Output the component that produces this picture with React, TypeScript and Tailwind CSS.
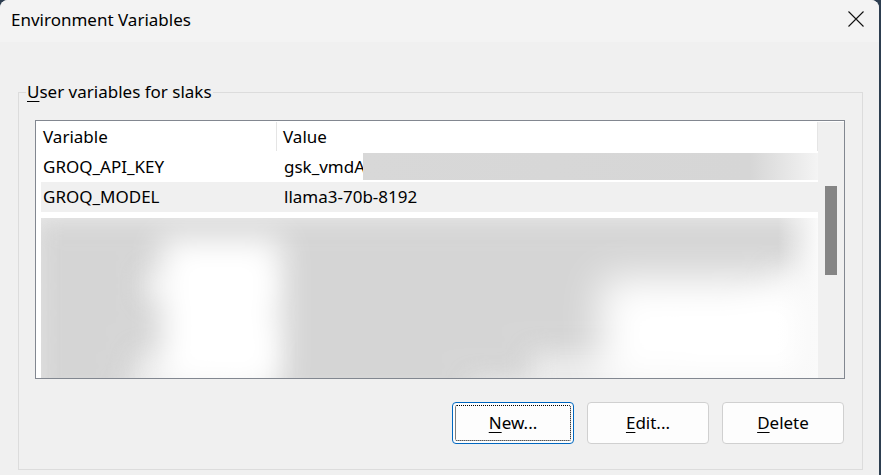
import React from "react";

const font = { fontFamily: '"Noto Sans", "Open Sans", sans-serif' };

function Btn({ u, rest, focused }: { u: string; rest: string; focused?: boolean }) {
  return (
    <div
      className={
        "relative w-[122px] h-[42px] rounded-[4px] bg-[#fdfdfd] flex items-center justify-center text-[17px] text-black border " +
        (focused ? "border-[#0067c0]" : "border-[#d0d0d0]")
      }
    >
      {focused && (
        <div className="absolute inset-[2px] border border-dotted border-black rounded-[2px]" />
      )}
      <span>
        <span className="underline underline-offset-[3px] decoration-1">{u}</span>
        {rest}
      </span>
    </div>
  );
}

function BlurRow({ a, c }: { a: number; c: number }) {
  return (
    <div className="h-[27px] flex items-center">
      <div className="w-[236px] h-full flex items-center">
        <div className="h-[26px] bg-[#d4d4d4]" style={{ width: a }} />
      </div>
      <div className="flex-1 h-full flex items-center">
        <div className="h-[26px] bg-[#d4d4d4]" style={{ width: c }} />
      </div>
    </div>
  );
}

export default function App() {
  return (
    <div className="w-[881px] h-[475px] bg-[#2d3e50] flex" style={font}>
      <div className="w-[879px] h-full bg-[#f0f0f0] rounded-t-[8px] flex flex-col overflow-hidden">
        {/* title bar */}
        <div className="h-[42px] bg-[#f3f3f3] flex items-start justify-between shrink-0">
          <div className="h-[39px] flex items-center pl-[11px] text-[17px] text-black">Environment Variables</div>
          <div className="w-[46px] h-[38px] flex items-center justify-center">
            <svg width="16" height="16" viewBox="0 0 16 16">
              <path d="M0.5 0.5 L15.5 15.5 M15.5 0.5 L0.5 15.5" stroke="#111" strokeWidth="1.1" fill="none" />
            </svg>
          </div>
        </div>

        {/* group box */}
        <div className="relative mt-[50px] ml-[18px] mr-[16px] mb-[5px] flex-1 border border-[#dcdcdc] flex flex-col">
          <div className="absolute left-[7px] top-[-12px] px-[1px] bg-[#f0f0f0] text-[17px] leading-[22px] text-black">
            <span className="underline underline-offset-[3px] decoration-1">U</span>ser variables for slaks
          </div>

          {/* list view */}
          <div className="ml-[16px] mt-[27px] w-[810px] h-[259px] border border-[#828790] bg-white flex overflow-hidden">
            <div className="flex-1 pl-[5px] flex flex-col overflow-hidden">
              {/* header */}
              <div className="h-[31px] flex text-[17px] text-black shrink-0">
                <div className="w-[236px] flex items-center pl-[2px] border-r border-[#e5e5e5] my-[1px]">Variable</div>
                <div className="flex-1 flex items-center pl-[6px] border-r border-[#e5e5e5] my-[1px]">Value</div>
              </div>
              {/* row 1 */}
              <div className="h-[30px] flex text-[17px] text-black shrink-0 relative">
                <div className="w-[236px] flex items-center pl-[2px]">GROQ_API_KEY</div>
                <div className="flex-1 flex items-center pl-[7px]">gsk_vmdA</div>
                <div className="absolute left-[322px] right-0 top-[1px] h-[27px] bg-gradient-to-r from-[#d8d8d8] via-[#d6d6d6] via-85% to-[#f4f4f4]" />
              </div>
              {/* row 2 */}
              <div className="h-[30px] flex text-[17px] text-black bg-[#f0f0f0] shrink-0">
                <div className="w-[236px] flex items-center pl-[2px]">GROQ_MODEL</div>
                <div className="flex-1 flex items-center pl-[7px]">llama3-70b-8192</div>
              </div>
              {/* blurred rows */}
              <div className="mt-[6px] flex-1 relative overflow-hidden bg-[#ececec]">
                <div className="absolute inset-[-6px] blur-[12px]">
                  <div className="h-[6px]" />
                  <BlurRow a={236} c={560} />
                  <BlurRow a={236} c={540} />
                  <BlurRow a={110} c={500} />
                  <BlurRow a={236} c={470} />
                  <BlurRow a={180} c={420} />
                  <BlurRow a={100} c={260} />
                  <BlurRow a={90} c={200} />
                </div>
                <div className="absolute left-[120px] top-[20px] w-[120px] h-[150px] bg-white blur-[16px]" />
                <div className="absolute left-[560px] top-[60px] w-[220px] h-[110px] bg-white blur-[20px]" />
                <div className="absolute right-0 top-0 w-[40px] h-full bg-gradient-to-r from-transparent to-[#fafafa]" />
              </div>
            </div>
            {/* scrollbar */}
            <div className="w-[26px] bg-[#f0f0f0] mt-[1px] flex justify-center pt-[64px]">
              <div className="w-[12px] h-[89px] bg-[#858585]" />
            </div>
          </div>

          {/* buttons */}
          <div className="mt-[23px] flex justify-end gap-[13px] mr-[18px]">
            <Btn u="N" rest="ew..." focused />
            <Btn u="E" rest="dit..." />
            <Btn u="D" rest="elete" />
          </div>
        </div>
      </div>
    </div>
  );
}
